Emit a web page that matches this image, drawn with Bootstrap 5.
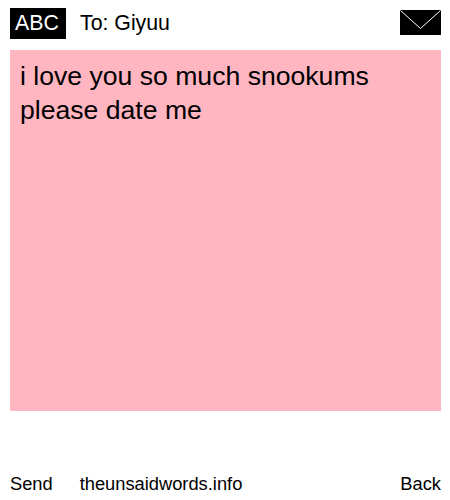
<!DOCTYPE html>
<html lang="en">
<head>
<meta charset="utf-8">
<title>Unsaid words</title>
<link rel="stylesheet" href="https://cdn.jsdelivr.net/npm/bootstrap@5.3.0/dist/css/bootstrap.min.css">
<style>
html, body { background: #fff; }
body { width: 450px; height: 500px; overflow: hidden; font-family: "Liberation Sans", Arial, sans-serif; color: #000; }
.page-wrap { width: 431px; margin-left: 10px; height: 500px; }
.top-bar { height: 50px; }
.abc-tag { width: 56px; height: 31px; margin-top: -3px; padding-right: 2px; font-size: 21.3px; line-height: 31px; }
.to-line { font-size: 21.3px; margin-left: 14px; margin-top: -3px; }
.env-icon { width: 41px; height: 25px; margin-top: -5px; }
.note-box { height: 361px; background: #ffb6c1; padding: 9px 10px; font-size: 26.6px; line-height: 34px; }
.foot-bar { margin-top: 61px; font-size: 18.3px; line-height: 24px; }
.site-name { margin-left: 27px; }
</style>
</head>
<body>
<div class="page-wrap d-flex flex-column">
  <div class="top-bar d-flex align-items-center">
    <div class="abc-tag bg-black text-white text-center">ABC</div>
    <div class="to-line flex-grow-1">To: Giyuu</div>
    <svg class="env-icon" viewBox="0 0 41 25" aria-hidden="true"><rect width="41" height="25" fill="#000"/><path d="M0.5 0.5 L20.5 18.5 L40.5 0.5" fill="none" stroke="#fff" stroke-width="1"/></svg>
  </div>
  <div class="note-box">i love you so much snookums please date me</div>
  <div class="foot-bar d-flex">
    <span>Send</span>
    <span class="site-name flex-grow-1">theunsaidwords.info</span>
    <span>Back</span>
  </div>
</div>
<script src="https://cdn.jsdelivr.net/npm/bootstrap@5.3.0/dist/js/bootstrap.bundle.min.js"></script>
</body>
</html>
